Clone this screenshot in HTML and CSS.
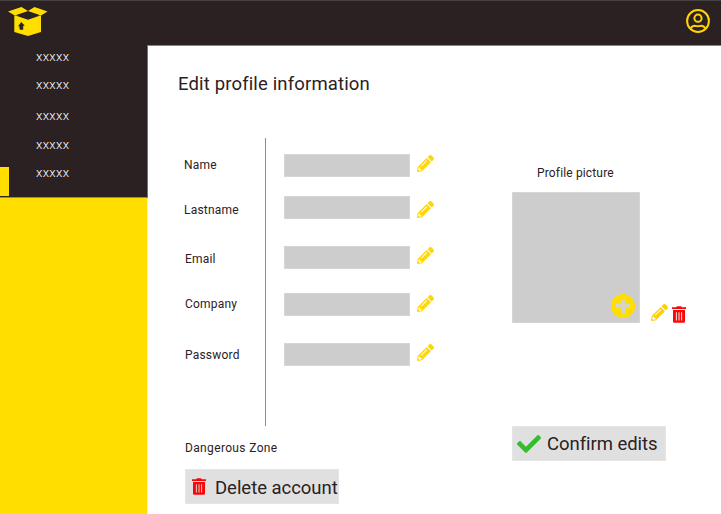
FILE: index.html
```html
<!DOCTYPE html>
<html lang="en">
<head>
<meta charset="utf-8">
<title>Edit profile</title>
<link rel="stylesheet" href="styles.css">
</head>
<body>
<svg class="defs" width="0" height="0" aria-hidden="true">
  <symbol id="pencil" viewBox="0 0 512 512"><path d="M497.9 142.1l-46.1 46.1c-4.7 4.7-12.3 4.7-17 0l-111-111c-4.7-4.7-4.7-12.3 0-17l46.1-46.1c18.7-18.7 49.1-18.7 67.9 0l60.1 60.1c18.8 18.7 18.8 49.1 0 67.9zM284.2 99.8L21.6 362.4.4 483.9c-2.9 16.4 11.4 30.6 27.8 27.8l121.5-21.3 262.6-262.6c4.7-4.7 4.7-12.3 0-17l-111-111c-4.8-4.7-12.4-4.7-17.1 0zM124.1 339.9c-5.5-5.5-5.5-14.3 0-19.8l154-154c5.5-5.5 14.3-5.5 19.8 0s5.5 14.3 0 19.8l-154 154c-5.5 5.5-14.3 5.5-19.8 0zM88 424h48v36.3l-64.5 11.3-31.1-31.1L51.7 376H88v48z"/></symbol>
  <symbol id="trash" viewBox="0 0 14 17"><path fill-rule="evenodd" d="M0 1.200h4.200L5 .2h4l.8 1H14v1.900H0zM1 4h12v11.400q0 1.400-1.400 1.400H2.400Q1 16.800 1 15.400zM3.900 6.200v8.300h.9V6.200zM6.550 6.200v8.300h.9V6.200zM9.200 6.200v8.300h.9V6.200z"/></symbol>
</svg>
<header class="topbar">
  <svg class="logo" viewBox="0 0 40 30"><path d="M6.300 8.500H33V25L20 29 6.300 25z"/><path d="M0 4.500 13.500 0 20 4 6.800 8.500zM20 4 26.500 0 39.500 4.500 33 8.500z"/><path class="cut" d="M8.200 8.700 20 4.700 31.600 8.700 20 12.700zM13.300 15l3.500 3.800h-1.600v4h-3.400l-.5-3.500H10z"/></svg>
  <svg class="avatar" viewBox="0 0 24 24"><circle cx="12" cy="12" r="10.900"/><circle cx="12" cy="9.200" r="3.600"/><path d="M4.600 19.600C6 17.300 8 16.700 9.600 16.900q2.400.7 4.800 0c1.800-.2 3.600.4 5 2.700"/></svg>
</header>
<div class="body">
  <aside class="sidebar">
    <nav class="menu">
      <a>xxxxx</a><a>xxxxx</a><a>xxxxx</a><a>xxxxx</a><a class="active">xxxxx</a>
    </nav>
  </aside>
  <main class="content">
    <h1>Edit profile information</h1>
    <div class="columns">
      <section class="form">
        <div class="fields">
          <div class="labels"><label>Name</label><label>Lastname</label><label>Email</label><label>Company</label><label>Password</label></div>
          <div class="inputs"><i></i><i></i><i></i><i></i><i></i></div>
          <div class="edits"><svg><use href="#pencil"/></svg><svg><use href="#pencil"/></svg><svg><use href="#pencil"/></svg><svg><use href="#pencil"/></svg><svg><use href="#pencil"/></svg></div>
        </div>
        <p class="danger">Dangerous Zone</p>
        <button class="delete"><svg><use href="#trash"/></svg><span>Delete account</span></button>
      </section>
      <section class="picture">
        <p>Profile picture</p>
        <div class="photo-row">
          <div class="photo"><svg viewBox="0 0 24 24"><circle cx="12" cy="12" r="12"/><path d="M12 5v14M5 12h14"/></svg></div>
          <svg class="edit"><use href="#pencil"/></svg>
          <svg class="remove"><use href="#trash"/></svg>
        </div>
        <button class="confirm"><svg viewBox="0 65 512 382"><path d="M173.898 439.404l-166.400-166.400c-9.997-9.997-9.997-26.206 0-36.204l36.203-36.204c9.997-9.998 26.207-9.998 36.204 0L192 312.690 432.095 72.596c9.997-9.997 26.207-9.997 36.204 0l36.203 36.204c9.997 9.997 9.997 26.206 0 36.204l-294.400 294.401c-9.998 9.997-26.207 9.997-36.204-.001z"/></svg><span>Confirm edits</span></button>
      </section>
    </div>
  </main>
</div>
</body>
</html>
```
FILE: styles.css
```css
* { box-sizing: border-box; }
body { margin: 0; width: 721px; height: 514px; overflow: hidden; background: #fff; color: #2b2122; font-family: Roboto, "Liberation Sans", sans-serif; font-size: 12px; }
svg { display: block; flex: none; }
.defs { position: absolute; }
p, h1 { margin: 0; font-weight: 400; }
.topbar { height: 45px; background: #2b2122; border-top: 1px solid #454041; display: flex; justify-content: space-between; padding: 6px 11px 0 8px; }
.logo { width: 40px; height: 30px; fill: #ffde00; }
.logo .cut { fill: #2b2122; }
.avatar { width: 24px; height: 24px; margin-top: 2px; fill: none; stroke: #ffd400; stroke-width: 2; }
.body { display: flex; height: 469px; }
.sidebar { width: 148px; background: #ffde00; border-right: 1px solid #fff3a0; }
.menu { width: 148px; height: 153px; background: #2b2122; border-right: 1px solid #777172; border-bottom: 1px solid #a8920a; display: flex; flex-direction: column; padding-top: 2px; }
.menu a { height: 20px; padding-left: 36px; line-height: 20px; font-size: 13px; font-weight: 300; letter-spacing: .35px; color: #fff; }
.menu a:nth-child(2) { margin-top: 8px; }
.menu a:nth-child(3) { margin-top: 11px; }
.menu a:nth-child(4) { margin-top: 9px; }
.menu .active { height: 29px; margin-top: 12px; padding-left: 27px; line-height: 11px; border-left: 9px solid #ffde00; }
.content { flex: 1; border-top: 1px solid #8a8586; }
h1 { margin: 26px 0 0 30px; height: 23px; line-height: 24px; font-size: 18.500px; letter-spacing: .15px; white-space: nowrap; }
.columns { display: flex; padding: 43px 0 0 36px; }
.form { width: 328px; }
.fields { display: flex; height: 288px; }
.labels { width: 82px; border-right: 1px solid #8e8e90; padding-top: 17px; }
.labels label { display: block; height: 20px; line-height: 20px; letter-spacing: .2px; }
.labels label:nth-child(2) { margin-top: 25px; }
.labels label:nth-child(3) { margin: 29px 0 0 1px; }
.labels label:nth-child(4) { margin: 25px 0 0 1px; }
.labels label:nth-child(5) { margin: 31px 0 0 1px; }
.inputs { width: 126px; margin-left: 18px; padding-top: 16px; }
.inputs i { display: block; height: 23px; background: #cdcdcd; border: 1px solid #d6d6d6; }
.inputs i:nth-child(2) { margin-top: 19px; }
.inputs i:nth-child(3) { margin-top: 27px; }
.inputs i:nth-child(4) { margin-top: 24px; }
.inputs i:nth-child(5) { margin-top: 27px; }
.edits { margin-left: 7px; padding-top: 17px; fill: #ffd60a; }
.edits svg { width: 17px; height: 17px; }
.edits svg:nth-child(n+2) { margin-top: 29px; }
.edits svg:nth-child(4) { margin-top: 31px; }
.edits svg:nth-child(5) { margin-top: 32px; }
.danger { margin: 12px 0 0 1px; height: 20px; line-height: 20px; letter-spacing: .35px; }
button { display: flex; align-items: center; border: 1px solid #e5e5e5; background: #e0e0e0; color: #2b2122; padding: 0; font: 18.500px Roboto, "Liberation Sans", sans-serif; white-space: nowrap; }
.delete { width: 154px; height: 35px; margin: 11px 0 0 1px; padding-left: 6px; }
.delete svg { width: 14px; height: 17px; fill: #f80808; margin-right: 9px; }
.delete span { letter-spacing: -.03px; padding-top: 2px; }
.picture { padding-top: 25px; }
.picture p { height: 20px; line-height: 20px; padding-left: 25px; letter-spacing: .15px; }
.photo-row { display: flex; align-items: flex-end; margin-top: 9px; }
.photo { width: 128px; height: 131px; background: #cdcdcd; border: 1px solid #d6d6d6; display: flex; align-items: flex-end; justify-content: flex-end; padding: 0 4px 4px 0; }
.photo svg { width: 24px; height: 24px; fill: #ffde00; stroke: none; }
.photo path { stroke: #d6d4c8; stroke-width: 4.200; }
.edit { width: 17px; height: 17px; margin: 0 4px 2px 11px; fill: #ffd00a; }
.remove { width: 14px; height: 17px; fill: #f80808; }
.confirm { width: 154px; height: 35px; margin-top: 103px; padding-left: 4px; }
.confirm svg { width: 24px; height: 18px; fill: #35bd2e; margin-right: 6px; }
.confirm span { padding-top: 1px; letter-spacing: -.05px; }
```
